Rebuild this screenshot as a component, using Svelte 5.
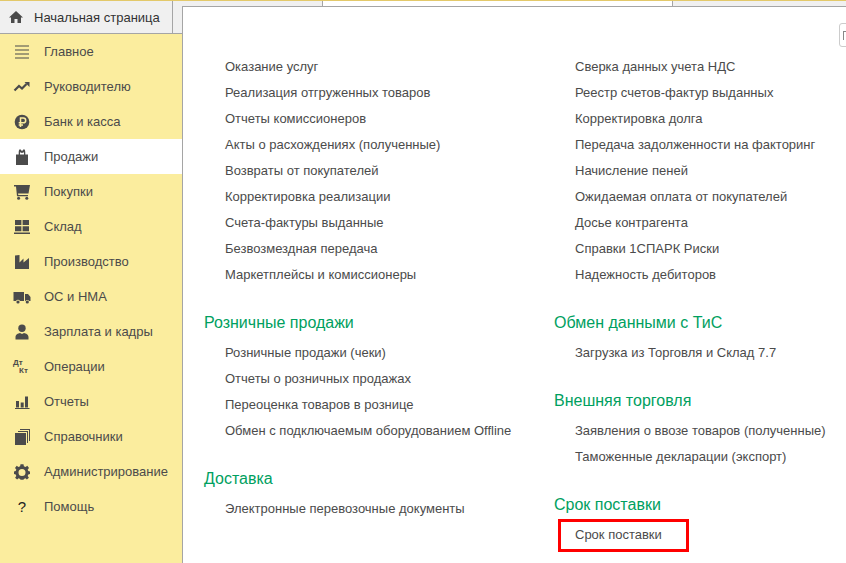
<script>
  const nav = [
    ['Главное', 'menu'], ['Руководителю', 'trend'], ['Банк и касса', 'rub'], ['Продажи', 'bag'],
    ['Покупки', 'cart'], ['Склад', 'stock'], ['Производство', 'factory'], ['ОС и НМА', 'truck'],
    ['Зарплата и кадры', 'person'], ['Операции', 'dtkt'], ['Отчеты', 'bars'], ['Справочники', 'books'],
    ['Администрирование', 'gear'], ['Помощь', 'help']
  ];
  const left = [
    { links: ['Оказание услуг', 'Реализация отгруженных товаров', 'Отчеты комиссионеров', 'Акты о расхождениях (полученные)', 'Возвраты от покупателей', 'Корректировка реализации', 'Счета-фактуры выданные', 'Безвозмездная передача', 'Маркетплейсы и комиссионеры'] },
    { title: 'Розничные продажи', links: ['Розничные продажи (чеки)', 'Отчеты о розничных продажах', 'Переоценка товаров в рознице', 'Обмен с подключаемым оборудованием Offline'] },
    { title: 'Доставка', links: ['Электронные перевозочные документы'] }
  ];
  const right = [
    { links: ['Сверка данных учета НДС', 'Реестр счетов-фактур выданных', 'Корректировка долга', 'Передача задолженности на факторинг', 'Начисление пеней', 'Ожидаемая оплата от покупателей', 'Досье контрагента', 'Справки 1СПАРК Риски', 'Надежность дебиторов'] },
    { title: 'Обмен данными с ТиС', links: ['Загрузка из Торговля и Склад 7.7'] },
    { title: 'Внешняя торговля', links: ['Заявления о ввозе товаров (полученные)', 'Таможенные декларации (экспорт)'] },
    { title: 'Срок поставки', links: ['Срок поставки'], marked: true }
  ];
  const columns = [left, right];
</script>

<div class="app">
  <aside class="side">
    <div class="home-row">
      <div class="home-tab">
        <svg class="home-icon" width="16" height="14" viewBox="0 0 16 14"><path d="M8 1 L1 7.5 H3 V13 H6.5 V9 H9.5 V13 H13 V7.5 H15 Z" fill="#4b4b4b"/></svg>
        <span>Начальная страница</span>
      </div>
    </div>
    <nav class="nav">
      {#each nav as [label, icon]}
        <div class="nav-item" class:active={label === 'Продажи'}>
          <span class="nav-icon">
            {#if icon === 'dtkt'}
              <span class="dtkt"><span>Дт</span><span class="kt">Кт</span></span>
            {:else if icon === 'help'}
              <span class="help">?</span>
            {:else}
              <svg width="18" height="18" viewBox="0 0 18 18" fill="#4b4b4b">
                {#if icon === 'menu'}
                  <path d="M2 2.5h14v1H2zM2 6.5h14v1H2zM2 10.5h14v1H2zM2 14.5h14v1H2z"/>
                {:else if icon === 'trend'}
                  <path d="M1.5 12.5 L6 8 L9 10.5 L13.5 6" fill="none" stroke="#4b4b4b" stroke-width="2.2"/><path d="M11.5 4 H16.5 V9 Z"/>
                {:else if icon === 'rub'}
                  <circle cx="9" cy="9" r="7.3"/><path d="M7.5 14V5H10.3a2.3 2.3 0 0 1 0 4.8H5.7M5.7 11.9H10" fill="none" stroke="#fbed9e" stroke-width="1.5"/>
                {:else if icon === 'bag'}
                  <path d="M3 6.5H5.7V4.5C5.7 1.2 7 1 7.7 1.7L9 3L10.3 1.7C11 1 12.3 1.2 12.3 4.5V6.5H15V17H3ZM7 6.5H11V4.2L9 5L7 4.2Z" fill-rule="evenodd"/>
                {:else if icon === 'cart'}
                  <path d="M1 2H17L15.5 10.5H5L5.3 12H15V13.3H4L3 3.5H1Z"/><circle cx="5.6" cy="15.3" r="1.5"/><circle cx="13.8" cy="15.3" r="1.5"/>
                {:else if icon === 'stock'}
                  <path d="M2 2h6.4v5H2zM9.6 2H16v5H9.6zM2 8.2h6.4v5H2zM9.6 8.2H16v5H9.6zM1 14.5h16V16H1z"/>
                {:else if icon === 'factory'}
                  <path d="M2 16V2.5L6.5 2V9.5L10.5 5.5V9.5L16 5V16Z"/>
                {:else if icon === 'truck'}
                  <path d="M0.5 4H11V13H7A2.2 2.2 0 0 0 3 13H0.5ZM12 6H15L17.5 9V13H16.2A2.2 2.2 0 0 0 12.4 13H12Z"/><circle cx="5" cy="14" r="1.6"/><circle cx="14.3" cy="14" r="1.6"/>
                {:else if icon === 'person'}
                  <circle cx="9" cy="5.3" r="3.7"/><path d="M2.5 16.5V14C2.5 11.5 5 10.5 7 10L9 11L11 10C13 10.5 15.5 11.5 15.5 14V16.5Z"/>
                {:else if icon === 'bars'}
                  <path d="M3 8h3v6.5H3zM7.7 9.500h3v5h-3zM12 3.500h3v11h-3zM2 15h14.500v1H2z"/>
                {:else if icon === 'books'}
                  <path d="M2 5H13V17H2ZM5 3H15V15H14V4H5ZM7 1H17V13H16V2H7Z"/>
                {:else if icon === 'gear'}
                  <path fill-rule="evenodd" d="M7.500 1.500H10.500L10.900 3.600L12.500 4.300L14.300 3.100L16 5.200L14.700 6.800L15.300 8.300L17 8.700V11.300L15.300 11.700L14.700 13.200L15.900 15L13.900 16.700L12.400 15.500L10.900 16.200L10.500 17H7.500L7.100 16.200L5.600 15.500L4.100 16.700L2.100 15L3.300 13.200L2.700 11.700L1 11.300V8.700L2.700 8.300L3.300 6.800L2 5.200L3.700 3.100L5.500 4.300L7.100 3.600ZM9 6.300A3.500 3.500 0 1 0 9 13.300A3.500 3.500 0 1 0 9 6.300Z" transform="translate(0 -0.300)"/>
                {/if}
              </svg>
            {/if}
          </span>
          <span>{label}</span>
        </div>
      {/each}
    </nav>
  </aside>

  <main class="main">
    <div class="strip">
      <div class="strip-a"></div>
      <div class="strip-b"></div>
      <div class="strip-c"></div>
    </div>
    <div class="panel">
      <div class="tool"><span class="tool-glyph"></span></div>
      <div class="cols">
        {#each columns as col}
          <div class="col">
            {#each col as group}
              {#if group.title}<h3>{group.title}</h3>{/if}
              {#each group.links as link}
                <div class="link">
                  {link}
                  {#if group.marked}<span class="mark"></span>{/if}
                </div>
              {/each}
            {/each}
          </div>
        {/each}
      </div>
    </div>
  </main>
</div>

<style>
  :global(body) {
    margin: 0;
    background: #fff;
  }
  .app {
    width: 846px;
    height: 563px;
    display: flex;
    overflow: hidden;
    font-family: "Liberation Sans", Arial, sans-serif;
    font-size: 13px;
    color: #4b4b4b;
    border-top: 1px solid #e3c96a;
    box-sizing: border-box;
  }
  .side {
    width: 183px;
    flex: none;
    display: flex;
    flex-direction: column;
    background: #fbed9e;
    box-sizing: border-box;
    position: relative;
  }
  .side::after {
    content: "";
    position: absolute;
    right: 0;
    top: 5px;
    bottom: 0;
    width: 1px;
    background: #a5a5a5;
  }
  .home-row {
    height: 33px;
    background: #f0f0f0;
    border-bottom: 1px solid #a5a5a5;
    box-sizing: content-box;
    height: 32px;
    padding-right: 9px;
  }
  .home-tab {
    width: 173px;
    height: 32px;
    box-sizing: border-box;
    border-right: 1px solid #a5a5a5;
    display: flex;
    align-items: center;
    padding-left: 8px;
    gap: 10px;
    color: #333;
  }
  .home-icon {
    flex: none;
  }
  .nav-item {
    height: 35px;
    display: flex;
    align-items: center;
    padding-left: 13px;
    gap: 13px;
  }
  .nav-item.active {
    background: #fff;
    margin-right: 1px;
  }
  .nav-icon {
    width: 18px;
    height: 18px;
    flex: none;
    display: flex;
    align-items: center;
    justify-content: center;
  }
  .dtkt {
    display: flex;
    flex-direction: column;
    font-size: 8px;
    font-weight: 700;
    line-height: 8px;
    width: 18px;
  }
  .kt {
    padding-left: 6px;
  }
  .help {
    font-size: 15px;
    font-weight: 400;
    color: #222;
  }
  .main {
    flex: 1;
    min-width: 0;
    display: flex;
    flex-direction: column;
  }
  .strip {
    height: 5px;
    display: flex;
    flex: none;
  }
  .strip-a {
    width: 139px;
    background: #f0f0f0;
    border-right: 1px solid #a5a5a5;
  }
  .strip-b {
    width: 349px;
    background: #fff;
    border-right: 1px solid #a5a5a5;
  }
  .strip-c {
    flex: 1;
    background: #f0f0f0;
  }
  .panel {
    flex: 1;
    border-top: 1px solid #a5a5a5;
    background: #fff;
    position: relative;
  }
  .cols {
    display: flex;
    padding: 47px 0 0 21px;
  }
  .col {
    width: 350px;
    flex: none;
  }
  .link {
    height: 26px;
    line-height: 26px;
    padding-left: 21px;
    white-space: nowrap;
    position: relative;
  }
  h3 {
    margin: 0;
    padding: 22px 0 4px;
    height: 26px;
    font-size: 16px;
    font-weight: 400;
    line-height: 26px;
    color: #00a060;
    white-space: nowrap;
  }
  .mark {
    position: absolute;
    left: 4px;
    top: -3px;
    width: 131px;
    height: 33px;
    box-sizing: border-box;
    border: 3px solid #f00;
  }
  .tool {
    position: absolute;
    left: 656px;
    top: 16px;
    width: 20px;
    height: 24px;
    box-sizing: border-box;
    border: 1px solid #ccc;
    border-radius: 3px;
  }
  .tool-glyph {
    position: absolute;
    left: 3px;
    top: 7px;
    width: 6px;
    height: 8px;
    border-left: 1px solid #888;
    border-top: 1px solid #888;
    border-right: 1px solid #888;
  }
</style>
